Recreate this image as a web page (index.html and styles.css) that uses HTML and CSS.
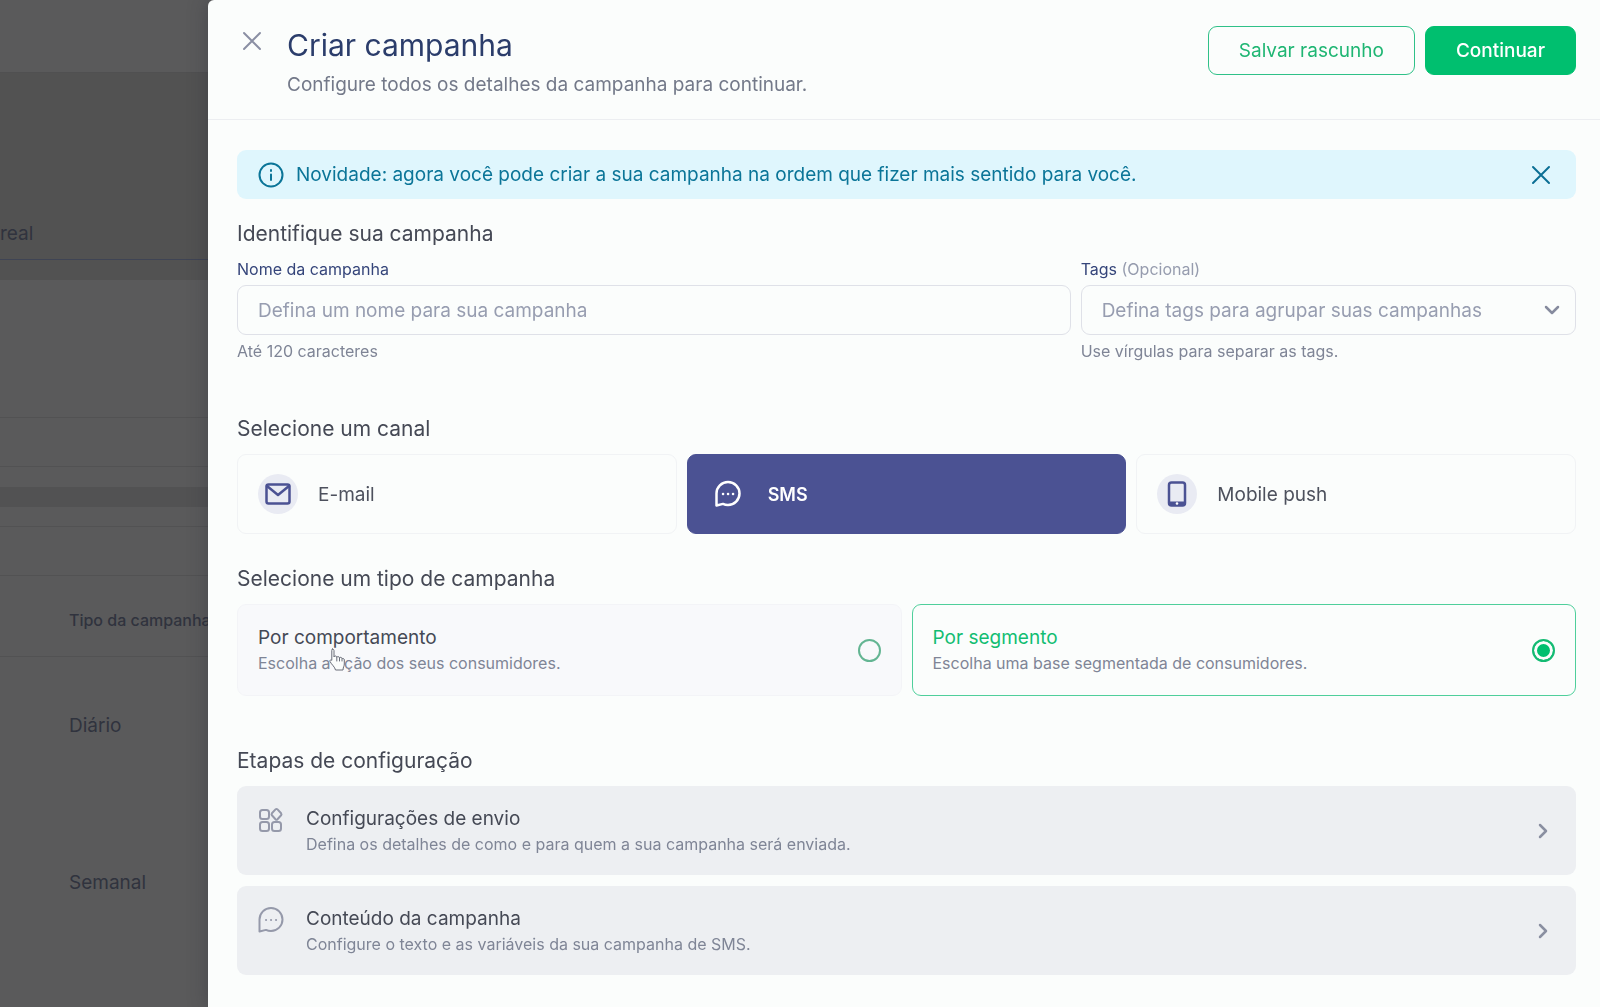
FILE: index.html
```html
<!DOCTYPE html>
<html lang="pt-BR">
<head>
    <meta charset="UTF-8">
    <meta name="viewport" content="width=device-width, initial-scale=1.0">
    <title>Criar campanha</title>
    <link rel="stylesheet" href="styles.css">
</head>
<body>
    <div class="pagina">
        <div class="pagina-topo"></div>
        <div class="pagina-abas">real</div>
        <div class="pagina-faixa"></div>
        <div class="pagina-filtros"></div>
        <div class="pagina-filtro"></div>
        <div class="pagina-busca"></div>
        <div class="pagina-filtro"></div>
        <div class="pagina-cabecalho">Tipo da campanha</div>
        <div class="pagina-linha">Diário</div>
        <div class="pagina-linha">Semanal</div>
    </div>

    <main class="painel">
        <header class="topo">
            <button class="fechar" aria-label="Fechar">
                <svg width="20" height="20" viewBox="0 0 20 20"><path d="M2 2l16 16M18 2L2 18"/></svg>
            </button>
            <div class="topo-texto">
                <h1>Criar campanha</h1>
                <p>Configure todos os detalhes da campanha para continuar.</p>
            </div>
            <div class="acoes">
                <button class="botao">Salvar rascunho</button>
                <button class="botao botao-cheio">Continuar</button>
            </div>
        </header>

        <div class="conteudo">
            <div class="aviso">
                <svg width="26" height="26" viewBox="0 0 26 26"><circle cx="13" cy="13" r="11.5"/><path d="M13 12.5v5.5M13 8v1"/></svg>
                <p>Novidade: agora você pode criar a sua campanha na ordem que fizer mais sentido para você.</p>
                <button class="aviso-fechar" aria-label="Fechar aviso">
                    <svg width="20" height="20" viewBox="0 0 20 20"><path d="M2 2l16 16M18 2L2 18"/></svg>
                </button>
            </div>

            <section class="identificacao">
                <h2>Identifique sua campanha</h2>
                <div class="campos">
                    <div class="campo">
                        <label for="nome">Nome da campanha</label>
                        <input type="text" id="nome" placeholder="Defina um nome para sua campanha">
                        <small>Até 120 caracteres</small>
                    </div>
                    <div class="campo">
                        <label for="tags">Tags <span>(Opcional)</span></label>
                        <div class="seletor">
                            <select id="tags">
                                <option>Defina tags para agrupar suas campanhas</option>
                            </select>
                            <svg width="16" height="10" viewBox="0 0 16 10"><path d="M2 2l6 6 6-6"/></svg>
                        </div>
                        <small>Use vírgulas para separar as tags.</small>
                    </div>
                </div>
            </section>

            <section class="canal">
                <h2>Selecione um canal</h2>
                <div class="canais">
                    <button class="cartao-canal">
                        <span class="bolha">
                            <svg width="26" height="22" viewBox="0 0 26 22"><rect x="1.5" y="1.5" width="23" height="19" rx="2"/><path d="M2 3l11 9 11-9"/></svg>
                        </span>
                        E-mail
                    </button>
                    <button class="cartao-canal ativo">
                        <span class="bolha">
                            <svg width="28" height="28" viewBox="0 0 28 28"><path d="M2.500 25.500V13.500A11.500 11.500 0 1 1 14 25a11.500 11.500 0 0 1-5-1.100z"/><path class="pontos" d="M9 14h.1M14 14h.1M19 14h.1"/></svg>
                        </span>
                        SMS
                    </button>
                    <button class="cartao-canal">
                        <span class="bolha">
                            <svg width="20" height="26" viewBox="0 0 20 26"><rect x="2" y="1.500" width="16" height="23" rx="2.500"/><path class="cheio" d="M2 20.500h16v2.500a1.500 1.500 0 0 1-1.500 1.500h-13A1.500 1.500 0 0 1 2 23z"/><circle class="claro" cx="10" cy="22.500" r="1.300"/></svg>
                        </span>
                        Mobile push
                    </button>
                </div>
            </section>

            <section class="tipo">
                <h2>Selecione um tipo de campanha</h2>
                <div class="tipos">
                    <label class="cartao-tipo">
                        <span class="textos">
                            <strong>Por comportamento</strong>
                            <span class="descricao">Escolha a ação dos seus consumidores.</span>
                        </span>
                        <input type="radio" name="tipo">
                        <svg class="cursor" width="17" height="23" viewBox="0 0 17 23"><path d="M3.500 1c1 0 1.500.8 1.500 1.700V9c.3-1.500 2.700-1.300 2.800.3.500-1.200 2.500-.9 2.700.6.600-1 2.400-.7 2.600.8.600-.6 2.200-.3 2.200 1.300V16c0 2-1.200 3-1.300 6H6.500C6 19 2.500 16.500 1 13.500c-.5-1.300.8-2.200 1.800-1.200V2.700C2.800 1.800 3 1 3.500 1z"/><path d="M7.800 9.500V13M10.500 10.300V13M13 11v2"/></svg>
                    </label>
                    <label class="cartao-tipo marcado">
                        <span class="textos">
                            <strong>Por segmento</strong>
                            <span class="descricao">Escolha uma base segmentada de consumidores.</span>
                        </span>
                        <input type="radio" name="tipo" checked>
                    </label>
                </div>
            </section>

            <section class="etapas">
                <h2>Etapas de configuração</h2>
                <button class="etapa">
                    <svg class="icone" width="28" height="28" viewBox="0 0 28 28"><rect x="3" y="4" width="9" height="9" rx="2.500"/><rect x="3" y="16" width="9" height="9" rx="2.500"/><rect x="15" y="16" width="9" height="9" rx="2.500"/><path d="M18.500 3.400q1-1 2 0l3.600 3.900q.8 1 0 2l-3.600 3.900q-1 1-2 0l-3.600-3.900q-.8-1 0-2z"/></svg>
                    <span class="textos">
                        <strong>Configurações de envio</strong>
                        <span class="descricao">Defina os detalhes de como e para quem a sua campanha será enviada.</span>
                    </span>
                    <svg class="seta" width="10" height="16" viewBox="0 0 10 16"><path d="M2 2l6 6-6 6"/></svg>
                </button>
                <button class="etapa">
                    <svg class="icone" width="28" height="28" viewBox="0 0 28 28"><path d="M2.500 25.500V13.500A11.500 11.500 0 1 1 14 25a11.500 11.500 0 0 1-5-1.100z"/><path class="pontos" d="M9 14h.1M14 14h.1M19 14h.1"/></svg>
                    <span class="textos">
                        <strong>Conteúdo da campanha</strong>
                        <span class="descricao">Configure o texto e as variáveis da sua campanha de SMS.</span>
                    </span>
                    <svg class="seta" width="10" height="16" viewBox="0 0 10 16"><path d="M2 2l6 6-6 6"/></svg>
                </button>
            </section>
        </div>
    </main>
</body>
</html>
```

FILE: styles.css
```css
* {
    box-sizing: border-box;
}

body {
    margin: 0;
    height: 100vh;
    overflow: hidden;
    font-family: Inter, "Open Sans", sans-serif;
    font-size: 19px;
    background-color: #5a5a5b;
}

h1, h2, p, strong {
    margin: 0;
    font-weight: 400;
}

button, input, select {
    font: inherit;
}

button {
    cursor: pointer;
}

svg {
    flex: none;
    fill: none;
    stroke: currentColor;
    stroke-width: 2;
    stroke-linecap: round;
    stroke-linejoin: round;
}

/* Página por trás do painel, já escurecida */
.pagina {
    color: #30333e;
}

.pagina-topo {
    height: 73px;
    border-bottom: 1px solid #505051;
}

.pagina-abas {
    height: 187px;
    padding-top: 148px;
    line-height: 26px;
    background-color: #525252;
    border-bottom: 1px solid #3f4454;
}

.pagina-faixa {
    height: 20px;
    background-color: #525252;
}

.pagina-filtros {
    height: 138px;
    border-bottom: 1px solid #525253;
}

.pagina-filtro {
    height: 49px;
    border-bottom: 1px solid #525253;
}

.pagina-busca {
    height: 60px;
    border-bottom: 1px solid #525253;
    background: linear-gradient(#5a5a5b 20px, #525253 20px, #525253 40px, #5a5a5b 40px);
}

.pagina-cabecalho {
    height: 81px;
    padding: 34px 0 0 69px;
    font-size: 16px;
    font-weight: 500;
    line-height: 20px;
    border-bottom: 1px solid #525253;
}

.pagina-linha {
    height: 157px;
    padding: 56px 0 0 69px;
    line-height: 26px;
}

/* Painel lateral */
.painel {
    position: fixed;
    top: 0;
    right: 0;
    bottom: 0;
    width: 87%;
    overflow: auto;
    background-color: #fbfdfc;
    border-top-left-radius: 6px;
    box-shadow: 0 0 20px rgba(40, 42, 52, 0.4);
    color: #454955;
}

.topo {
    display: flex;
    align-items: flex-start;
    padding: 26px 24px 21px 29px;
    border-bottom: 1px solid #eceef1;
}

.fechar, .aviso-fechar {
    display: flex;
    padding: 5px;
    border: none;
    background: none;
    color: #8a8fa3;
}

.topo-texto {
    flex: 1;
    padding-left: 20px;
}

h1 {
    font-size: 30px;
    line-height: 38px;
    color: #2b3d6b;
}

.topo-texto p {
    margin-top: 8px;
    line-height: 26px;
    color: #737989;
}

.acoes {
    display: flex;
    gap: 10px;
}

.botao {
    height: 49px;
    padding: 0 30px;
    border: 1px solid #2fc188;
    border-radius: 9px;
    background-color: #fbfdfc;
    color: #1fb673;
}

.botao-cheio {
    background-color: #00bf6f;
    border-color: #00bf6f;
    color: #fff;
    font-weight: 500;
}

.conteudo {
    padding: 30px 24px 30px 29px;
}

.aviso {
    display: flex;
    align-items: center;
    height: 49px;
    padding: 0 20px 0 21px;
    border-radius: 9px;
    background-color: #dff6fd;
    color: #0b7598;
}

.aviso p {
    flex: 1;
    padding-left: 12px;
}

.aviso-fechar {
    color: #0b6f94;
}

h2 {
    margin-bottom: 10px;
    font-size: 21px;
    line-height: 30px;
}

.identificacao {
    margin-top: 20px;
}

.campos {
    display: grid;
    grid-template-columns: 833fr 495fr;
    gap: 10px;
}

.campo {
    display: flex;
    flex-direction: column;
    gap: 6px;
}

.campo label {
    font-size: 16px;
    line-height: 20px;
    color: #35457a;
}

.campo label span {
    color: #969cae;
}

.campo small {
    font-size: 16px;
    line-height: 20px;
    color: #7f8596;
}

.campo input, .campo select {
    display: block;
    width: 100%;
    height: 50px;
    padding: 0 20px;
    border: 1px solid #dfe1e8;
    border-radius: 9px;
    background-color: #fbfdfc;
    color: #979db0;
    appearance: none;
}

.campo input::placeholder {
    color: #979db0;
}

.seletor {
    position: relative;
}

.seletor svg {
    position: absolute;
    top: 20px;
    right: 16px;
    color: #868b9e;
    stroke-width: 2.5;
    pointer-events: none;
}

.canal {
    margin-top: 53px;
}

.canais {
    display: grid;
    grid-template-columns: repeat(3, 1fr);
    gap: 10px;
}

.cartao-canal {
    display: flex;
    align-items: center;
    gap: 20px;
    height: 80px;
    padding: 0 20px;
    border: 1px solid #f1f3f5;
    border-radius: 9px;
    background-color: #fbfdfc;
    color: #4d515d;
}

.bolha {
    display: flex;
    align-items: center;
    justify-content: center;
    width: 40px;
    height: 40px;
    border-radius: 50%;
    background-color: #e9ebf3;
    color: #4b5293;
}

.bolha svg {
    stroke-width: 2.5;
}

.bolha .cheio {
    fill: #4b5293;
    stroke: none;
}

.bolha .claro {
    fill: #fff;
    stroke: none;
}

.ativo {
    background-color: #4b5293;
    border-color: #4b5293;
    color: #fff;
    font-size: 18px;
    font-weight: 600;
}

.ativo .bolha {
    background: none;
    color: #fff;
}

.tipo {
    margin-top: 30px;
}

.tipos {
    display: grid;
    grid-template-columns: 1fr 1fr;
    gap: 10px;
}

.cartao-tipo {
    position: relative;
    display: flex;
    align-items: center;
    padding: 20px;
    border: 1px solid #f3f4f7;
    border-radius: 9px;
    background-color: #f8f9fb;
    cursor: pointer;
}

.textos {
    flex: 1;
    display: flex;
    flex-direction: column;
}

.textos strong {
    line-height: 26px;
}

.descricao {
    font-size: 16px;
    line-height: 24px;
    color: #7f8596;
}

.marcado {
    background-color: #fbfdfc;
    border-color: #4fcf9b;
}

.marcado strong {
    color: #12bd72;
}

input[type="radio"] {
    appearance: none;
    width: 23px;
    height: 23px;
    margin: 0;
    border: 2px solid #63b592;
    border-radius: 50%;
}

input[type="radio"]:checked {
    border-color: #14bb73;
    background-color: #00bf6f;
    box-shadow: inset 0 0 0 3px #fbfdfc;
}

.cursor {
    position: absolute;
    top: 43px;
    left: 91px;
    fill: #fbfdfc;
    stroke: #686c78;
    stroke-width: 1;
}

.etapas {
    margin-top: 50px;
}

.etapa {
    display: flex;
    align-items: center;
    width: 100%;
    padding: 20px 28px 19px 20px;
    border: none;
    border-radius: 9px;
    background-color: #edeff2;
    color: #454955;
    text-align: left;
}

.etapa + .etapa {
    margin-top: 11px;
}

.icone {
    align-self: flex-start;
    margin-right: 21px;
    color: #9599aa;
}

.seta {
    color: #8a8fa1;
    stroke-width: 2.5;
}
```
